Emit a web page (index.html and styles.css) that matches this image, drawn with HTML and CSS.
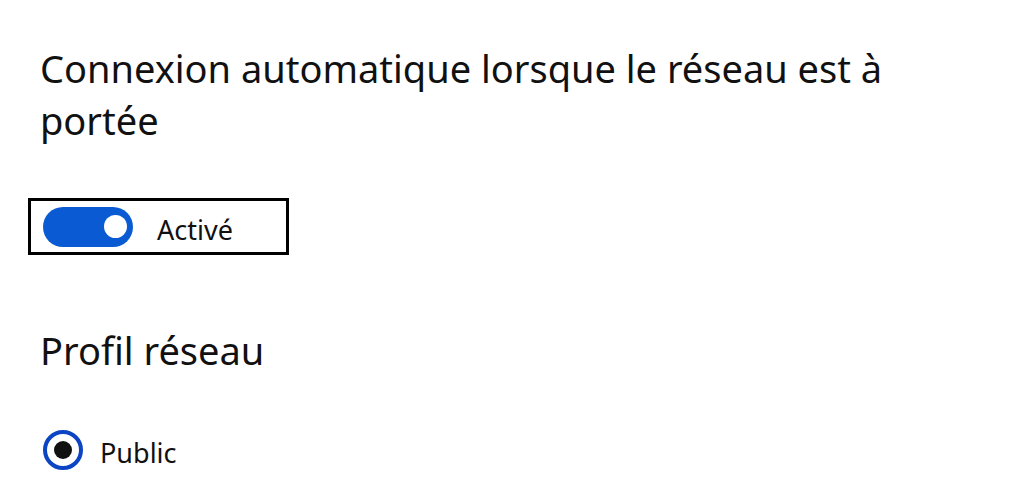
FILE: index.html
```html
<!DOCTYPE html>
<html lang="fr">
<head>
<meta charset="utf-8">
<link rel="stylesheet" href="styles.css">
</head>
<body>
<main class="page">
  <h2 class="title">Connexion automatique lorsque le réseau est à portée</h2>
  <div class="toggle-box">
    <span class="switch"><span class="knob"></span></span>
    <span class="toggle-label">Activé</span>
  </div>
  <h2 class="title profile">Profil réseau</h2>
  <label class="radio-row">
    <span class="radio"><span class="dot"></span></span>
    <span class="radio-label">Public</span>
  </label>
</main>
</body>
</html>
```

FILE: styles.css
```css
html, body {
  margin: 0;
  padding: 0;
  background: #ffffff;
}
body {
  font-family: "Noto Sans", "Open Sans", sans-serif;
  color: #111111;
}
.page {
  padding: 42px 0 0 40px;
  width: 900px;
}
.title {
  font-weight: 400;
  font-size: 38px;
  line-height: 52px;
  margin: 0;
  letter-spacing: 0;
}
.toggle-box {
  margin: 52px 0 0 -12px;
  width: 255px;
  height: 51px;
  border: 3px solid #000;
  display: flex;
  align-items: center;
  box-sizing: content-box;
}
.switch {
  margin-left: 12px;
  width: 90px;
  height: 40px;
  border-radius: 20px;
  background: #0a5bd3;
  display: flex;
  align-items: center;
  justify-content: flex-end;
}
.knob {
  width: 23px;
  height: 23px;
  border-radius: 50%;
  background: #fff;
  margin-right: 6px;
}
.toggle-label {
  margin-left: 24px;
  margin-top: 6px;
  font-size: 27px;
}
.profile {
  margin-top: 69px;
}
.radio-row {
  display: flex;
  align-items: center;
  margin-top: 52px;
}
.radio {
  width: 40px;
  height: 40px;
  box-sizing: border-box;
  border: 4px solid #0b45c4;
  border-radius: 50%;
  display: flex;
  align-items: center;
  justify-content: center;
  margin-left: 3px;
}
.dot {
  width: 18px;
  height: 18px;
  border-radius: 50%;
  background: #111;
}
.radio-label {
  margin-left: 17px;
  margin-top: 6px;
  font-size: 27px;
}
```
